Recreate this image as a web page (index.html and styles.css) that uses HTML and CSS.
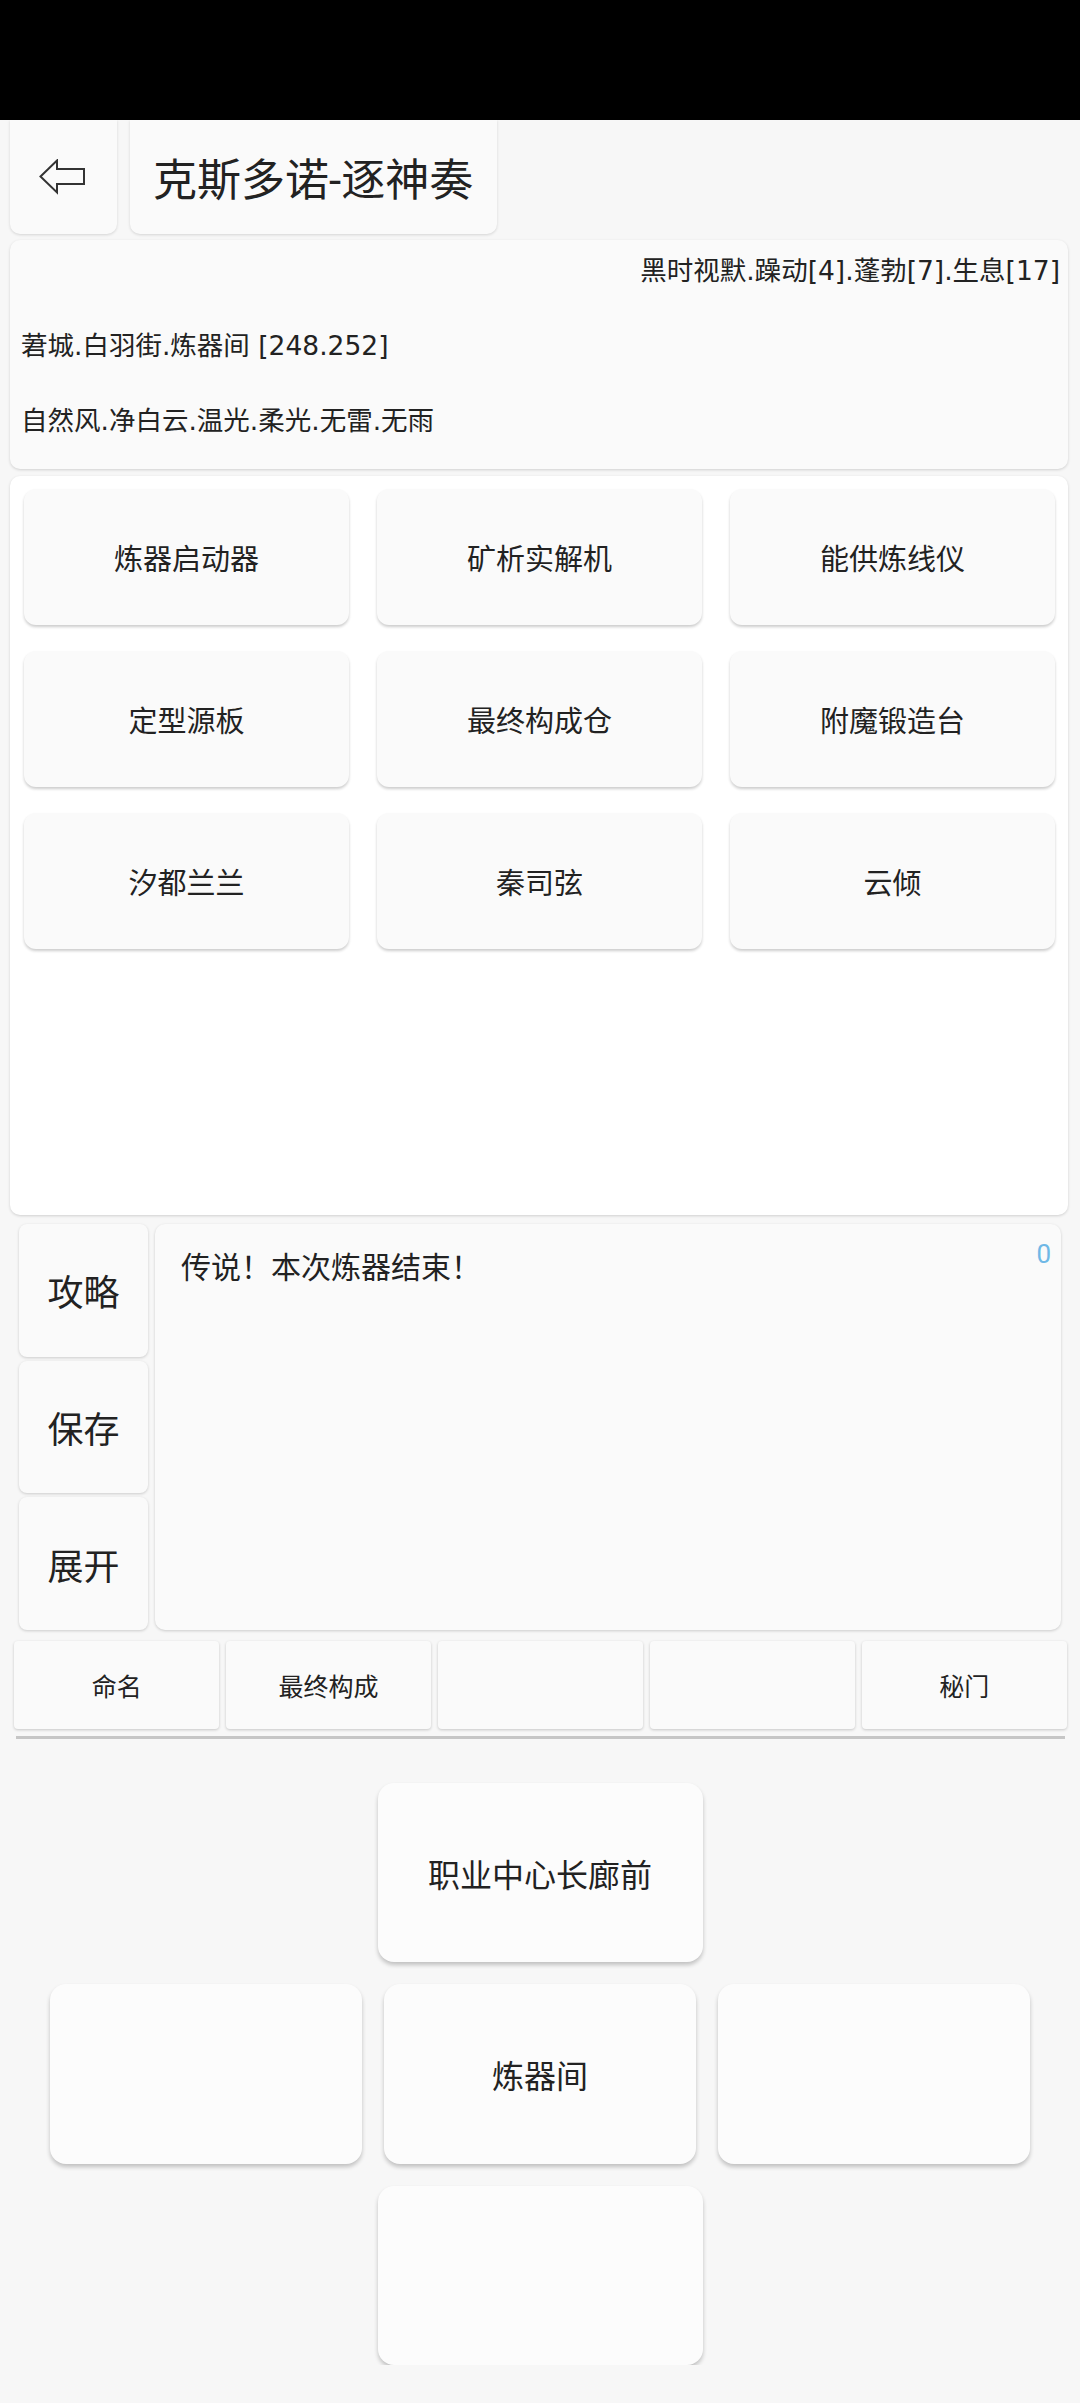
FILE: index.html
```html
<!DOCTYPE html>
<html lang="zh-CN">
<head>
    <meta charset="UTF-8">
    <meta name="viewport" content="width=device-width, initial-scale=1.0">
    <title>克斯多诺-逐神奏</title>
    <link rel="stylesheet" href="styles.css">
</head>
<body>
    <div class="status-bar"></div>

    <div class="top-bar">
        <div class="back-btn">
            <svg width="47" height="36" viewBox="0 0 47 36">
                <polygon points="1.5,17.5 18,1.5 18,10 45,10 45,25 18,25 18,33.5" fill="none" stroke="#333" stroke-width="2" stroke-linejoin="miter"/>
            </svg>
        </div>
        <div class="title-box">克斯多诺-逐神奏</div>
    </div>

    <div class="info-card">
        <p class="info-line right">黑时视默.躁动[4].蓬勃[7].生息[17]</p>
        <p class="info-line">莙城.白羽街.炼器间 [248.252]</p>
        <p class="info-line">自然风.净白云.温光.柔光.无雷.无雨</p>
    </div>

    <div class="grid-card">
        <div class="grid-btn">炼器启动器</div>
        <div class="grid-btn">矿析实解机</div>
        <div class="grid-btn">能供炼线仪</div>
        <div class="grid-btn">定型源板</div>
        <div class="grid-btn">最终构成仓</div>
        <div class="grid-btn">附魔锻造台</div>
        <div class="grid-btn">汐都兰兰</div>
        <div class="grid-btn">秦司弦</div>
        <div class="grid-btn">云倾</div>
    </div>

    <div class="middle">
        <div class="side-btns">
            <div class="side-btn">攻略</div>
            <div class="side-btn">保存</div>
            <div class="side-btn">展开</div>
        </div>
        <div class="message">
            <div class="msg-text">传说！本次炼器结束！</div>
            <div class="msg-count">0</div>
        </div>
    </div>

    <div class="action-row">
        <div class="action-btn">命名</div>
        <div class="action-btn">最终构成</div>
        <div class="action-btn"></div>
        <div class="action-btn"></div>
        <div class="action-btn">秘门</div>
    </div>

    <div class="divider"></div>

    <div class="nav">
        <div class="nav-row">
            <div class="nav-btn">职业中心长廊前</div>
        </div>
        <div class="nav-row">
            <div class="nav-btn side"></div>
            <div class="nav-btn side">炼器间</div>
            <div class="nav-btn side"></div>
        </div>
        <div class="nav-row">
            <div class="nav-btn"></div>
        </div>
    </div>
</body>
</html>
```

FILE: styles.css
```css
body {
    margin: 0;
    background-color: #f7f7f7;
    font-family: Roboto, "Noto Sans CJK SC", sans-serif;
    color: #222;
}
p {
    margin: 0;
}
.status-bar {
    height: 120px;
    background-color: #000;
}
.top-bar {
    display: flex;
    gap: 13px;
    padding: 0 10px;
    height: 114px;
}
.back-btn, .title-box {
    background-color: #fafafa;
    border-radius: 0 0 10px 10px;
    box-shadow: 0 1px 3px rgba(0, 0, 0, 0.14);
    display: flex;
    align-items: center;
}
.back-btn {
    width: 107px;
    justify-content: center;
    padding-right: 3px;
    box-sizing: border-box;
}
.title-box {
    padding: 0 24px 0 23px;
    font-size: 44px;
}
.info-card {
    margin: 6px 12px 0 10px;
    height: 229px;
    box-sizing: border-box;
    padding: 13px 8px 0 11px;
    background-color: #fafafa;
    border-radius: 10px;
    box-shadow: 0 1px 3px rgba(0, 0, 0, 0.16);
    font-family: "DejaVu Sans", "Noto Sans CJK SC", sans-serif;
}
.info-line {
    font-size: 26.5px;
    line-height: 36px;
}
.info-line + .info-line {
    margin-top: 39px;
}
.info-line.right {
    text-align: right;
}
.grid-card {
    margin: 7px 12px 0 10px;
    height: 739px;
    box-sizing: border-box;
    padding: 13px 13px 0 14px;
    background-color: #fff;
    border-radius: 10px;
    box-shadow: 0 1px 3px rgba(0, 0, 0, 0.16);
    display: grid;
    grid-template-columns: repeat(3, 1fr);
    grid-auto-rows: 136px;
    column-gap: 28px;
    row-gap: 26px;
    align-content: start;
}
.grid-btn {
    background-color: #fafafa;
    border-radius: 12px;
    box-shadow: 0 2px 3px rgba(0, 0, 0, 0.2);
    display: flex;
    align-items: center;
    justify-content: center;
    font-size: 29px;
}
.middle {
    display: flex;
    gap: 7px;
    margin: 9px 19px 0 19px;
    height: 406px;
}
.side-btns {
    width: 129px;
    display: flex;
    flex-direction: column;
    gap: 4px;
}
.side-btn {
    flex: 1;
    background-color: #fafafa;
    border-radius: 8px;
    box-shadow: 0 1px 3px rgba(0, 0, 0, 0.18);
    display: flex;
    align-items: center;
    justify-content: center;
    font-size: 36px;
}
.message {
    flex: 1;
    background-color: #fafafa;
    border-radius: 10px;
    box-shadow: 0 1px 3px rgba(0, 0, 0, 0.18);
    display: flex;
    justify-content: space-between;
    align-items: flex-start;
    padding: 13px 10px 0 26px;
}
.msg-text {
    margin-top: 11px;
    font-size: 30px;
    line-height: 40px;
}
.msg-count {
    font-size: 26px;
    line-height: 34px;
    color: #6fb8e6;
}
.action-row {
    display: grid;
    grid-template-columns: repeat(5, 1fr);
    gap: 6.5px;
    margin: 11px 13px 0 14px;
    height: 88px;
}
.action-btn {
    background-color: #fafafa;
    border-radius: 4px;
    box-shadow: 0 1px 3px rgba(0, 0, 0, 0.2);
    display: flex;
    align-items: center;
    justify-content: center;
    font-size: 25px;
}
.divider {
    margin: 7px 15px 0 16px;
    height: 3px;
    background-color: #c6c6c6;
}
.nav {
    margin-top: 44px;
    display: flex;
    flex-direction: column;
    gap: 22px;
}
.nav-row {
    display: flex;
    justify-content: center;
    gap: 22px;
}
.nav-btn {
    width: 325px;
    height: 179px;
    background-color: #fcfcfc;
    border-radius: 16px;
    box-shadow: 0 3px 4px rgba(0, 0, 0, 0.22);
    display: flex;
    align-items: center;
    justify-content: center;
    font-size: 32px;
}
.nav-btn.side {
    width: 312px;
    height: 180px;
}
```
